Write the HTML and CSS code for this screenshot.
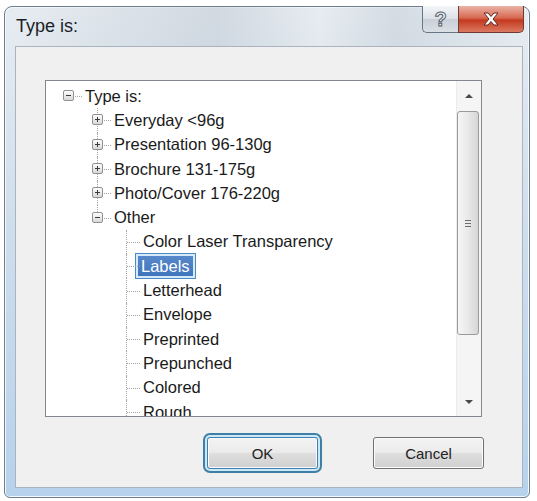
FILE: index.html
```
<!DOCTYPE html>
<html lang="en">
<head>
  <meta charset="UTF-8" />
  <title>Type is:</title>
  <link rel="stylesheet" href="styles.css">
</head>
<body>
  <div class="window">
    <div class="titlebar">
      <span class="title">Type is:</span>
      <div class="caption-btns">
        <span class="cap help">?</span>
        <span class="cap close">
          <svg width="18" height="14" viewBox="0 0 18 14">
            <path d="M2 1h4l3 3.5L12 1h4l-5 6 5 6h-4l-3-3.5L6 13H2l5-6z" fill="#fff" stroke="#5a2a22" stroke-width="1" stroke-linejoin="round"/>
          </svg>
        </span>
      </div>
    </div>

    <div class="client">
      <!-- tree view -->
      <div class="tree">
        <div class="tree-body">
          <div class="row">
            <span class="cell"><span class="box"></span><span class="h"></span></span>
            <span class="label">Type is:</span>
          </div>
          <div class="row">
            <span class="cell"></span>
            <span class="cell v"><span class="box plus"></span><span class="h"></span></span>
            <span class="label">Everyday &lt;96g</span>
          </div>
          <div class="row">
            <span class="cell"></span>
            <span class="cell v"><span class="box plus"></span><span class="h"></span></span>
            <span class="label">Presentation 96-130g</span>
          </div>
          <div class="row">
            <span class="cell"></span>
            <span class="cell v"><span class="box plus"></span><span class="h"></span></span>
            <span class="label">Brochure 131-175g</span>
          </div>
          <div class="row">
            <span class="cell"></span>
            <span class="cell v"><span class="box plus"></span><span class="h"></span></span>
            <span class="label">Photo/Cover 176-220g</span>
          </div>
          <div class="row">
            <span class="cell"></span>
            <span class="cell v-last"><span class="box"></span><span class="h"></span></span>
            <span class="label">Other</span>
          </div>
          <div class="row">
            <span class="cell"></span><span class="cell"></span>
            <span class="cell v"><span class="h"></span></span>
            <span class="label">Color Laser Transparency</span>
          </div>
          <div class="row">
            <span class="cell"></span><span class="cell"></span>
            <span class="cell v"><span class="h"></span></span>
            <span class="label"><span class="sel">Labels</span></span>
          </div>
          <div class="row">
            <span class="cell"></span><span class="cell"></span>
            <span class="cell v"><span class="h"></span></span>
            <span class="label">Letterhead</span>
          </div>
          <div class="row">
            <span class="cell"></span><span class="cell"></span>
            <span class="cell v"><span class="h"></span></span>
            <span class="label">Envelope</span>
          </div>
          <div class="row">
            <span class="cell"></span><span class="cell"></span>
            <span class="cell v"><span class="h"></span></span>
            <span class="label">Preprinted</span>
          </div>
          <div class="row">
            <span class="cell"></span><span class="cell"></span>
            <span class="cell v"><span class="h"></span></span>
            <span class="label">Prepunched</span>
          </div>
          <div class="row">
            <span class="cell"></span><span class="cell"></span>
            <span class="cell v"><span class="h"></span></span>
            <span class="label">Colored</span>
          </div>
          <div class="row">
            <span class="cell"></span><span class="cell"></span>
            <span class="cell v"><span class="h"></span></span>
            <span class="label">Rough</span>
          </div>
        </div>

        <div class="scrollbar">
          <div class="arrow up"><span></span></div>
          <div class="thumb"><span class="grip"></span></div>
          <div class="track"></div>
          <div class="arrow down"><span></span></div>
        </div>
      </div>

      <div class="buttons">
        <button class="btn default">OK</button>
        <button class="btn">Cancel</button>
      </div>
    </div>
  </div>
</body>
</html>
```

FILE: styles.css
```
body {
  margin: 0;
  background-color: #fff;
  font-family: "Liberation Sans", Arial, sans-serif;
  color: #1e1e1e;
}
.window {
  box-sizing: border-box;
  width: 526px;
  height: 492px;
  margin: 6px 0 0 4px;
  padding: 0 6px 9px 10px;
  border: 1px solid #6f7d8c;
  border-radius: 8px 8px 6px 6px;
  background: linear-gradient(#e7ecf1, #cfdeec 45%, #b6d2ec);
  box-shadow: inset 0 0 0 1px #f4f8fb;
  display: flex;
  flex-direction: column;
}
.titlebar {
  height: 39px;
  display: flex;
  justify-content: space-between;
  align-items: flex-start;
  flex: none;
  background: linear-gradient(to right, transparent, rgba(170,182,196,0.35) 40%, transparent 60%, rgba(170,182,196,0.3) 75%, transparent);
}
.title {
  margin: 9px 0 0 1px;
  font-size: 18px;
  color: #1a1f26;
}
.caption-btns {
  display: flex;
  margin: -1px -1px 0 0;
}
.cap {
  box-sizing: border-box;
  height: 27px;
  display: flex;
  align-items: center;
  justify-content: center;
  border: 1px solid #687584;
  border-top: none;
}
.help {
  width: 36px;
  border-right: none;
  border-radius: 0 0 0 5px;
  background: linear-gradient(#f4f6f8, #dde2e8 48%, #c9d0d8 52%, #d9dfe5);
  font-size: 20px;
  font-weight: bold;
  color: #eef0f2;
  -webkit-text-stroke: 1px #55606b;
}
.close {
  width: 66px;
  border-radius: 0 0 5px 0;
  border-color: #6e3b33;
  background: linear-gradient(#eab3a6, #d86a52 45%, #c4391f 55%, #dc7a62);
}
.client {
  flex: 1;
  background-color: #f0f0f0;
  border: 1px solid #a9b4c0;
  padding: 33px 0 0 29px;
}
.tree {
  box-sizing: border-box;
  width: 437px;
  height: 337px;
  border: 1px solid #828790;
  background-color: #fff;
  display: flex;
  overflow: hidden;
}
.tree-body {
  flex: 1;
  padding: 3px 0 0 8px;
  font-size: 16.5px;
  color: #1a1a1a;
  overflow: hidden;
}
.row {
  height: 24.3px;
  display: flex;
  align-items: center;
  white-space: nowrap;
}
.cell {
  position: relative;
  width: 29px;
  align-self: stretch;
  flex: none;
}
.cell.v::before, .cell.v-last::before {
  content: "";
  position: absolute;
  left: 14px;
  top: 0;
  bottom: 0;
  border-left: 1px dotted #a5a5a5;
}
.cell.v-last::before {
  bottom: 50%;
}
.h {
  position: absolute;
  left: 15px;
  right: 1px;
  top: 50%;
  border-top: 1px dotted #a5a5a5;
}
.box {
  position: absolute;
  left: 9px;
  top: 50%;
  margin-top: -6px;
  width: 9px;
  height: 9px;
  border: 1px solid #8f9193;
  border-radius: 2px;
  background: linear-gradient(#fdfdfd, #d8d8d8);
  z-index: 1;
}
.box::before {
  content: "";
  position: absolute;
  left: 2px;
  right: 2px;
  top: 4px;
  height: 1px;
  background-color: #3a3a3a;
}
.box.plus::after {
  content: "";
  position: absolute;
  top: 2px;
  bottom: 2px;
  left: 4px;
  width: 1px;
  background-color: #3a3a3a;
}
.label {
  margin-left: 2px;
}
.sel {
  display: inline-block;
  margin-left: -7px;
  padding: 0 3px;
  line-height: 20px;
  color: #fff;
  background: linear-gradient(#5788cb, #3f74bd);
  border: 2px solid #d6eaf8;
  outline: 1px solid #4a8ac2;
}
.scrollbar {
  width: 24px;
  flex: none;
  display: flex;
  flex-direction: column;
  background-color: #f5f5f5;
  border-left: 1px solid #ececec;
}
.arrow {
  height: 29px;
  display: flex;
  align-items: center;
  justify-content: center;
}
.arrow span {
  width: 0;
  height: 0;
  border-left: 4px solid transparent;
  border-right: 4px solid transparent;
}
.up span {
  border-bottom: 4px solid #4a4a4a;
}
.down span {
  border-top: 4px solid #4a4a4a;
}
.thumb {
  height: 222px;
  margin: 1px 2px 0 0;
  border: 1px solid #9a9a9a;
  border-radius: 3px;
  background: linear-gradient(to right, #f6f6f6, #e9e9e9 50%, #d6d6d6);
  display: flex;
  align-items: center;
  justify-content: center;
}
.grip {
  width: 6px;
  height: 7px;
  background: repeating-linear-gradient(#6d6d6d 0 1px, transparent 1px 3px);
}
.track {
  flex: 1;
}
.buttons {
  display: flex;
  justify-content: flex-end;
  gap: 55px;
  padding-right: 38px;
  margin-top: 20px;
}
.btn {
  width: 111px;
  height: 32px;
  font-family: "Liberation Sans", Arial, sans-serif;
  font-size: 15px;
  color: #222;
  border: 1px solid #707070;
  border-radius: 3px;
  background: linear-gradient(#f3f3f3, #ebebeb 48%, #dedede 52%, #d0d0d0);
  box-shadow: inset 0 0 0 1px #fbfbfb;
}
.btn.default {
  border-color: #3c7fb1;
  box-shadow: inset 0 0 0 1px #fbfbfb, 0 0 0 2px #cde8f6, 0 0 0 4px #3f7fa6;
}
```
